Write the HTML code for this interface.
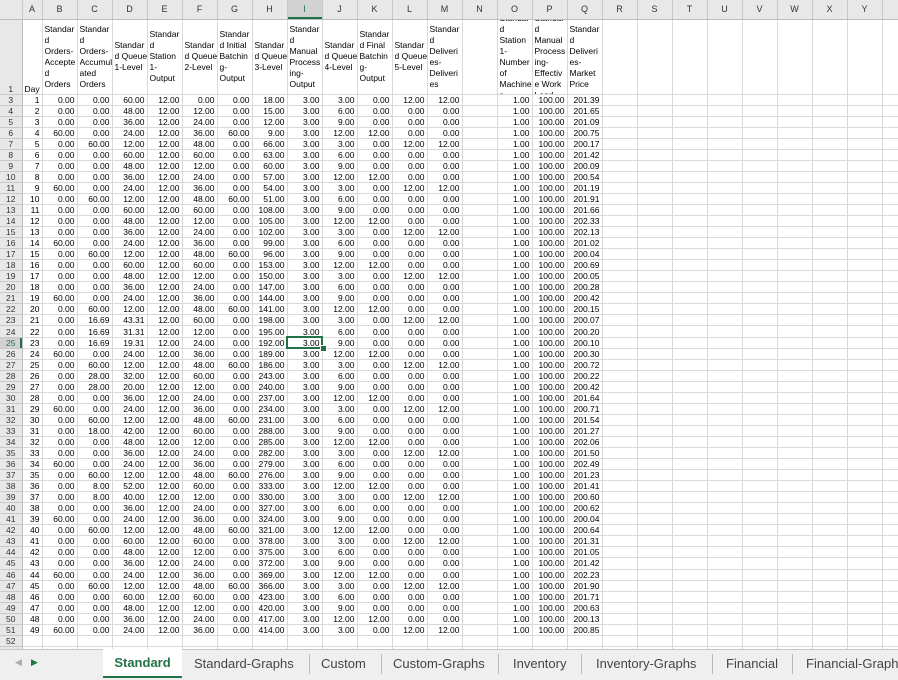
<!DOCTYPE html>
<html><head><meta charset="utf-8">
<style>
html,body{margin:0;padding:0;width:898px;height:679px;overflow:hidden;background:#fff;font-family:"Liberation Sans",Arial,sans-serif;}
table{border-collapse:collapse;table-layout:fixed;position:absolute;left:0;top:0;width:898px;}
tr{height:11.06px;}
td,th{padding:0 2px 0 0;font-size:8.5px;line-height:10px;height:10.06px;border-right:1px solid #d9d9d9;border-bottom:1px solid #d9d9d9;text-align:right;white-space:nowrap;overflow:hidden;color:#000;font-weight:normal;}
tr.ch{height:19px;}
tr.ch th{height:18px;background:#e8e8e8;color:#333;text-align:center;font-size:9px;border-right:1px solid #c8c8c8;border-bottom:1px solid #bcbcbc;padding:0;}
tr.ch th.csel{background:#d2d2d2;box-shadow:inset 0 -2px 0 #217346;color:#217346;}
th.rn{background:#e8e8e8;color:#333;text-align:center;padding:0;border-right:1px solid #bcbcbc;border-bottom:1px solid #c8c8c8;}
th.rnsel{background:#d2d2d2;color:#217346;box-shadow:inset -2px 0 0 #217346;}
tr.h1{height:75px;}
tr.h1 td,tr.h1 th{height:74px;vertical-align:middle;text-align:left;padding:0 0 0 2px;}
tr.h1 th{text-align:center;padding:0;}
tr.h1 td div{height:74px;display:flex;align-items:center;overflow:hidden;line-height:11px;white-space:nowrap;}
tr.h1 td.day{vertical-align:bottom;}
.tabs{position:absolute;left:0;top:649px;width:898px;height:30px;background:#efefef;border-top:1px solid #c6c6c6;font-size:13px;color:#444;}
.tabs span{position:absolute;top:6px;}
.tabs i{position:absolute;top:4px;width:1px;height:20px;background:#b8b8b8;}
.act{position:absolute;left:103px;top:-1px;width:79px;height:27px;background:#fff;border-bottom:2px solid #217346;color:#217346;font-weight:bold;text-align:center;line-height:28px;font-size:13px;}
.selbox{position:absolute;left:286px;top:336px;width:37px;height:13px;border:2px solid #217346;box-sizing:border-box;}
.fh{position:absolute;left:320px;top:345px;width:5px;height:5px;background:#217346;border:1px solid #fff;}
</style></head><body>
<table>
<colgroup><col style="width:22px"><col style="width:20px"><col span="24" style="width:35px"><col style="width:16px"></colgroup>
<tr class="ch"><th></th><th>A</th><th>B</th><th>C</th><th>D</th><th>E</th><th>F</th><th>G</th><th>H</th><th class="csel">I</th><th>J</th><th>K</th><th>L</th><th>M</th><th>N</th><th>O</th><th>P</th><th>Q</th><th>R</th><th>S</th><th>T</th><th>U</th><th>V</th><th>W</th><th>X</th><th>Y</th><th></th></tr>
<tr class="h1"><th class="rn" style="vertical-align:bottom">1</th><td class="day">Day</td>
<td><div>Standar<br>d<br>Orders-<br>Accepte<br>d<br>Orders</div></td>
<td><div>Standar<br>d<br>Orders-<br>Accumul<br>ated<br>Orders</div></td>
<td><div>Standar<br>d Queue<br>1-Level</div></td>
<td><div>Standar<br>d<br>Station<br>1-<br>Output</div></td>
<td><div>Standar<br>d Queue<br>2-Level</div></td>
<td><div>Standar<br>d Initial<br>Batchin<br>g-<br>Output</div></td>
<td><div>Standar<br>d Queue<br>3-Level</div></td>
<td><div>Standar<br>d<br>Manual<br>Process<br>ing-<br>Output</div></td>
<td><div>Standar<br>d Queue<br>4-Level</div></td>
<td><div>Standar<br>d Final<br>Batchin<br>g-<br>Output</div></td>
<td><div>Standar<br>d Queue<br>5-Level</div></td>
<td><div>Standar<br>d<br>Deliveri<br>es-<br>Deliveri<br>es</div></td>
<td></td>
<td><div>Standar<br>d<br>Station<br>1-<br>Number<br>of<br>Machine<br>s</div></td>
<td><div>Standar<br>d<br>Manual<br>Process<br>ing-<br>Effectiv<br>e Work<br>Load</div></td>
<td><div>Standar<br>d<br>Deliveri<br>es-<br>Market<br>Price</div></td>
<td></td><td></td><td></td><td></td><td></td><td></td><td></td><td></td><td></td></tr>
<tr><th class="rn">3</th><td>1</td><td>0.00</td><td>0.00</td><td>60.00</td><td>12.00</td><td>0.00</td><td>0.00</td><td>18.00</td><td>3.00</td><td>3.00</td><td>0.00</td><td>12.00</td><td>12.00</td><td></td><td>1.00</td><td>100.00</td><td>201.39</td><td></td><td></td><td></td><td></td><td></td><td></td><td></td><td></td><td></td></tr>
<tr><th class="rn">4</th><td>2</td><td>0.00</td><td>0.00</td><td>48.00</td><td>12.00</td><td>12.00</td><td>0.00</td><td>15.00</td><td>3.00</td><td>6.00</td><td>0.00</td><td>0.00</td><td>0.00</td><td></td><td>1.00</td><td>100.00</td><td>201.65</td><td></td><td></td><td></td><td></td><td></td><td></td><td></td><td></td><td></td></tr>
<tr><th class="rn">5</th><td>3</td><td>0.00</td><td>0.00</td><td>36.00</td><td>12.00</td><td>24.00</td><td>0.00</td><td>12.00</td><td>3.00</td><td>9.00</td><td>0.00</td><td>0.00</td><td>0.00</td><td></td><td>1.00</td><td>100.00</td><td>201.09</td><td></td><td></td><td></td><td></td><td></td><td></td><td></td><td></td><td></td></tr>
<tr><th class="rn">6</th><td>4</td><td>60.00</td><td>0.00</td><td>24.00</td><td>12.00</td><td>36.00</td><td>60.00</td><td>9.00</td><td>3.00</td><td>12.00</td><td>12.00</td><td>0.00</td><td>0.00</td><td></td><td>1.00</td><td>100.00</td><td>200.75</td><td></td><td></td><td></td><td></td><td></td><td></td><td></td><td></td><td></td></tr>
<tr><th class="rn">7</th><td>5</td><td>0.00</td><td>60.00</td><td>12.00</td><td>12.00</td><td>48.00</td><td>0.00</td><td>66.00</td><td>3.00</td><td>3.00</td><td>0.00</td><td>12.00</td><td>12.00</td><td></td><td>1.00</td><td>100.00</td><td>200.17</td><td></td><td></td><td></td><td></td><td></td><td></td><td></td><td></td><td></td></tr>
<tr><th class="rn">8</th><td>6</td><td>0.00</td><td>0.00</td><td>60.00</td><td>12.00</td><td>60.00</td><td>0.00</td><td>63.00</td><td>3.00</td><td>6.00</td><td>0.00</td><td>0.00</td><td>0.00</td><td></td><td>1.00</td><td>100.00</td><td>201.42</td><td></td><td></td><td></td><td></td><td></td><td></td><td></td><td></td><td></td></tr>
<tr><th class="rn">9</th><td>7</td><td>0.00</td><td>0.00</td><td>48.00</td><td>12.00</td><td>12.00</td><td>0.00</td><td>60.00</td><td>3.00</td><td>9.00</td><td>0.00</td><td>0.00</td><td>0.00</td><td></td><td>1.00</td><td>100.00</td><td>200.09</td><td></td><td></td><td></td><td></td><td></td><td></td><td></td><td></td><td></td></tr>
<tr><th class="rn">10</th><td>8</td><td>0.00</td><td>0.00</td><td>36.00</td><td>12.00</td><td>24.00</td><td>0.00</td><td>57.00</td><td>3.00</td><td>12.00</td><td>12.00</td><td>0.00</td><td>0.00</td><td></td><td>1.00</td><td>100.00</td><td>200.54</td><td></td><td></td><td></td><td></td><td></td><td></td><td></td><td></td><td></td></tr>
<tr><th class="rn">11</th><td>9</td><td>60.00</td><td>0.00</td><td>24.00</td><td>12.00</td><td>36.00</td><td>0.00</td><td>54.00</td><td>3.00</td><td>3.00</td><td>0.00</td><td>12.00</td><td>12.00</td><td></td><td>1.00</td><td>100.00</td><td>201.19</td><td></td><td></td><td></td><td></td><td></td><td></td><td></td><td></td><td></td></tr>
<tr><th class="rn">12</th><td>10</td><td>0.00</td><td>60.00</td><td>12.00</td><td>12.00</td><td>48.00</td><td>60.00</td><td>51.00</td><td>3.00</td><td>6.00</td><td>0.00</td><td>0.00</td><td>0.00</td><td></td><td>1.00</td><td>100.00</td><td>201.91</td><td></td><td></td><td></td><td></td><td></td><td></td><td></td><td></td><td></td></tr>
<tr><th class="rn">13</th><td>11</td><td>0.00</td><td>0.00</td><td>60.00</td><td>12.00</td><td>60.00</td><td>0.00</td><td>108.00</td><td>3.00</td><td>9.00</td><td>0.00</td><td>0.00</td><td>0.00</td><td></td><td>1.00</td><td>100.00</td><td>201.66</td><td></td><td></td><td></td><td></td><td></td><td></td><td></td><td></td><td></td></tr>
<tr><th class="rn">14</th><td>12</td><td>0.00</td><td>0.00</td><td>48.00</td><td>12.00</td><td>12.00</td><td>0.00</td><td>105.00</td><td>3.00</td><td>12.00</td><td>12.00</td><td>0.00</td><td>0.00</td><td></td><td>1.00</td><td>100.00</td><td>202.33</td><td></td><td></td><td></td><td></td><td></td><td></td><td></td><td></td><td></td></tr>
<tr><th class="rn">15</th><td>13</td><td>0.00</td><td>0.00</td><td>36.00</td><td>12.00</td><td>24.00</td><td>0.00</td><td>102.00</td><td>3.00</td><td>3.00</td><td>0.00</td><td>12.00</td><td>12.00</td><td></td><td>1.00</td><td>100.00</td><td>202.13</td><td></td><td></td><td></td><td></td><td></td><td></td><td></td><td></td><td></td></tr>
<tr><th class="rn">16</th><td>14</td><td>60.00</td><td>0.00</td><td>24.00</td><td>12.00</td><td>36.00</td><td>0.00</td><td>99.00</td><td>3.00</td><td>6.00</td><td>0.00</td><td>0.00</td><td>0.00</td><td></td><td>1.00</td><td>100.00</td><td>201.02</td><td></td><td></td><td></td><td></td><td></td><td></td><td></td><td></td><td></td></tr>
<tr><th class="rn">17</th><td>15</td><td>0.00</td><td>60.00</td><td>12.00</td><td>12.00</td><td>48.00</td><td>60.00</td><td>96.00</td><td>3.00</td><td>9.00</td><td>0.00</td><td>0.00</td><td>0.00</td><td></td><td>1.00</td><td>100.00</td><td>200.04</td><td></td><td></td><td></td><td></td><td></td><td></td><td></td><td></td><td></td></tr>
<tr><th class="rn">18</th><td>16</td><td>0.00</td><td>0.00</td><td>60.00</td><td>12.00</td><td>60.00</td><td>0.00</td><td>153.00</td><td>3.00</td><td>12.00</td><td>12.00</td><td>0.00</td><td>0.00</td><td></td><td>1.00</td><td>100.00</td><td>200.69</td><td></td><td></td><td></td><td></td><td></td><td></td><td></td><td></td><td></td></tr>
<tr><th class="rn">19</th><td>17</td><td>0.00</td><td>0.00</td><td>48.00</td><td>12.00</td><td>12.00</td><td>0.00</td><td>150.00</td><td>3.00</td><td>3.00</td><td>0.00</td><td>12.00</td><td>12.00</td><td></td><td>1.00</td><td>100.00</td><td>200.05</td><td></td><td></td><td></td><td></td><td></td><td></td><td></td><td></td><td></td></tr>
<tr><th class="rn">20</th><td>18</td><td>0.00</td><td>0.00</td><td>36.00</td><td>12.00</td><td>24.00</td><td>0.00</td><td>147.00</td><td>3.00</td><td>6.00</td><td>0.00</td><td>0.00</td><td>0.00</td><td></td><td>1.00</td><td>100.00</td><td>200.28</td><td></td><td></td><td></td><td></td><td></td><td></td><td></td><td></td><td></td></tr>
<tr><th class="rn">21</th><td>19</td><td>60.00</td><td>0.00</td><td>24.00</td><td>12.00</td><td>36.00</td><td>0.00</td><td>144.00</td><td>3.00</td><td>9.00</td><td>0.00</td><td>0.00</td><td>0.00</td><td></td><td>1.00</td><td>100.00</td><td>200.42</td><td></td><td></td><td></td><td></td><td></td><td></td><td></td><td></td><td></td></tr>
<tr><th class="rn">22</th><td>20</td><td>0.00</td><td>60.00</td><td>12.00</td><td>12.00</td><td>48.00</td><td>60.00</td><td>141.00</td><td>3.00</td><td>12.00</td><td>12.00</td><td>0.00</td><td>0.00</td><td></td><td>1.00</td><td>100.00</td><td>200.15</td><td></td><td></td><td></td><td></td><td></td><td></td><td></td><td></td><td></td></tr>
<tr><th class="rn">23</th><td>21</td><td>0.00</td><td>16.69</td><td>43.31</td><td>12.00</td><td>60.00</td><td>0.00</td><td>198.00</td><td>3.00</td><td>3.00</td><td>0.00</td><td>12.00</td><td>12.00</td><td></td><td>1.00</td><td>100.00</td><td>200.07</td><td></td><td></td><td></td><td></td><td></td><td></td><td></td><td></td><td></td></tr>
<tr><th class="rn">24</th><td>22</td><td>0.00</td><td>16.69</td><td>31.31</td><td>12.00</td><td>12.00</td><td>0.00</td><td>195.00</td><td>3.00</td><td>6.00</td><td>0.00</td><td>0.00</td><td>0.00</td><td></td><td>1.00</td><td>100.00</td><td>200.20</td><td></td><td></td><td></td><td></td><td></td><td></td><td></td><td></td><td></td></tr>
<tr><th class="rn rnsel">25</th><td>23</td><td>0.00</td><td>16.69</td><td>19.31</td><td>12.00</td><td>24.00</td><td>0.00</td><td>192.00</td><td>3.00</td><td>9.00</td><td>0.00</td><td>0.00</td><td>0.00</td><td></td><td>1.00</td><td>100.00</td><td>200.10</td><td></td><td></td><td></td><td></td><td></td><td></td><td></td><td></td><td></td></tr>
<tr><th class="rn">26</th><td>24</td><td>60.00</td><td>0.00</td><td>24.00</td><td>12.00</td><td>36.00</td><td>0.00</td><td>189.00</td><td>3.00</td><td>12.00</td><td>12.00</td><td>0.00</td><td>0.00</td><td></td><td>1.00</td><td>100.00</td><td>200.30</td><td></td><td></td><td></td><td></td><td></td><td></td><td></td><td></td><td></td></tr>
<tr><th class="rn">27</th><td>25</td><td>0.00</td><td>60.00</td><td>12.00</td><td>12.00</td><td>48.00</td><td>60.00</td><td>186.00</td><td>3.00</td><td>3.00</td><td>0.00</td><td>12.00</td><td>12.00</td><td></td><td>1.00</td><td>100.00</td><td>200.72</td><td></td><td></td><td></td><td></td><td></td><td></td><td></td><td></td><td></td></tr>
<tr><th class="rn">28</th><td>26</td><td>0.00</td><td>28.00</td><td>32.00</td><td>12.00</td><td>60.00</td><td>0.00</td><td>243.00</td><td>3.00</td><td>6.00</td><td>0.00</td><td>0.00</td><td>0.00</td><td></td><td>1.00</td><td>100.00</td><td>200.22</td><td></td><td></td><td></td><td></td><td></td><td></td><td></td><td></td><td></td></tr>
<tr><th class="rn">29</th><td>27</td><td>0.00</td><td>28.00</td><td>20.00</td><td>12.00</td><td>12.00</td><td>0.00</td><td>240.00</td><td>3.00</td><td>9.00</td><td>0.00</td><td>0.00</td><td>0.00</td><td></td><td>1.00</td><td>100.00</td><td>200.42</td><td></td><td></td><td></td><td></td><td></td><td></td><td></td><td></td><td></td></tr>
<tr><th class="rn">30</th><td>28</td><td>0.00</td><td>0.00</td><td>36.00</td><td>12.00</td><td>24.00</td><td>0.00</td><td>237.00</td><td>3.00</td><td>12.00</td><td>12.00</td><td>0.00</td><td>0.00</td><td></td><td>1.00</td><td>100.00</td><td>201.64</td><td></td><td></td><td></td><td></td><td></td><td></td><td></td><td></td><td></td></tr>
<tr><th class="rn">31</th><td>29</td><td>60.00</td><td>0.00</td><td>24.00</td><td>12.00</td><td>36.00</td><td>0.00</td><td>234.00</td><td>3.00</td><td>3.00</td><td>0.00</td><td>12.00</td><td>12.00</td><td></td><td>1.00</td><td>100.00</td><td>200.71</td><td></td><td></td><td></td><td></td><td></td><td></td><td></td><td></td><td></td></tr>
<tr><th class="rn">32</th><td>30</td><td>0.00</td><td>60.00</td><td>12.00</td><td>12.00</td><td>48.00</td><td>60.00</td><td>231.00</td><td>3.00</td><td>6.00</td><td>0.00</td><td>0.00</td><td>0.00</td><td></td><td>1.00</td><td>100.00</td><td>201.54</td><td></td><td></td><td></td><td></td><td></td><td></td><td></td><td></td><td></td></tr>
<tr><th class="rn">33</th><td>31</td><td>0.00</td><td>18.00</td><td>42.00</td><td>12.00</td><td>60.00</td><td>0.00</td><td>288.00</td><td>3.00</td><td>9.00</td><td>0.00</td><td>0.00</td><td>0.00</td><td></td><td>1.00</td><td>100.00</td><td>201.27</td><td></td><td></td><td></td><td></td><td></td><td></td><td></td><td></td><td></td></tr>
<tr><th class="rn">34</th><td>32</td><td>0.00</td><td>0.00</td><td>48.00</td><td>12.00</td><td>12.00</td><td>0.00</td><td>285.00</td><td>3.00</td><td>12.00</td><td>12.00</td><td>0.00</td><td>0.00</td><td></td><td>1.00</td><td>100.00</td><td>202.06</td><td></td><td></td><td></td><td></td><td></td><td></td><td></td><td></td><td></td></tr>
<tr><th class="rn">35</th><td>33</td><td>0.00</td><td>0.00</td><td>36.00</td><td>12.00</td><td>24.00</td><td>0.00</td><td>282.00</td><td>3.00</td><td>3.00</td><td>0.00</td><td>12.00</td><td>12.00</td><td></td><td>1.00</td><td>100.00</td><td>201.50</td><td></td><td></td><td></td><td></td><td></td><td></td><td></td><td></td><td></td></tr>
<tr><th class="rn">36</th><td>34</td><td>60.00</td><td>0.00</td><td>24.00</td><td>12.00</td><td>36.00</td><td>0.00</td><td>279.00</td><td>3.00</td><td>6.00</td><td>0.00</td><td>0.00</td><td>0.00</td><td></td><td>1.00</td><td>100.00</td><td>202.49</td><td></td><td></td><td></td><td></td><td></td><td></td><td></td><td></td><td></td></tr>
<tr><th class="rn">37</th><td>35</td><td>0.00</td><td>60.00</td><td>12.00</td><td>12.00</td><td>48.00</td><td>60.00</td><td>276.00</td><td>3.00</td><td>9.00</td><td>0.00</td><td>0.00</td><td>0.00</td><td></td><td>1.00</td><td>100.00</td><td>201.23</td><td></td><td></td><td></td><td></td><td></td><td></td><td></td><td></td><td></td></tr>
<tr><th class="rn">38</th><td>36</td><td>0.00</td><td>8.00</td><td>52.00</td><td>12.00</td><td>60.00</td><td>0.00</td><td>333.00</td><td>3.00</td><td>12.00</td><td>12.00</td><td>0.00</td><td>0.00</td><td></td><td>1.00</td><td>100.00</td><td>201.41</td><td></td><td></td><td></td><td></td><td></td><td></td><td></td><td></td><td></td></tr>
<tr><th class="rn">39</th><td>37</td><td>0.00</td><td>8.00</td><td>40.00</td><td>12.00</td><td>12.00</td><td>0.00</td><td>330.00</td><td>3.00</td><td>3.00</td><td>0.00</td><td>12.00</td><td>12.00</td><td></td><td>1.00</td><td>100.00</td><td>200.60</td><td></td><td></td><td></td><td></td><td></td><td></td><td></td><td></td><td></td></tr>
<tr><th class="rn">40</th><td>38</td><td>0.00</td><td>0.00</td><td>36.00</td><td>12.00</td><td>24.00</td><td>0.00</td><td>327.00</td><td>3.00</td><td>6.00</td><td>0.00</td><td>0.00</td><td>0.00</td><td></td><td>1.00</td><td>100.00</td><td>200.62</td><td></td><td></td><td></td><td></td><td></td><td></td><td></td><td></td><td></td></tr>
<tr><th class="rn">41</th><td>39</td><td>60.00</td><td>0.00</td><td>24.00</td><td>12.00</td><td>36.00</td><td>0.00</td><td>324.00</td><td>3.00</td><td>9.00</td><td>0.00</td><td>0.00</td><td>0.00</td><td></td><td>1.00</td><td>100.00</td><td>200.04</td><td></td><td></td><td></td><td></td><td></td><td></td><td></td><td></td><td></td></tr>
<tr><th class="rn">42</th><td>40</td><td>0.00</td><td>60.00</td><td>12.00</td><td>12.00</td><td>48.00</td><td>60.00</td><td>321.00</td><td>3.00</td><td>12.00</td><td>12.00</td><td>0.00</td><td>0.00</td><td></td><td>1.00</td><td>100.00</td><td>200.64</td><td></td><td></td><td></td><td></td><td></td><td></td><td></td><td></td><td></td></tr>
<tr><th class="rn">43</th><td>41</td><td>0.00</td><td>0.00</td><td>60.00</td><td>12.00</td><td>60.00</td><td>0.00</td><td>378.00</td><td>3.00</td><td>3.00</td><td>0.00</td><td>12.00</td><td>12.00</td><td></td><td>1.00</td><td>100.00</td><td>201.31</td><td></td><td></td><td></td><td></td><td></td><td></td><td></td><td></td><td></td></tr>
<tr><th class="rn">44</th><td>42</td><td>0.00</td><td>0.00</td><td>48.00</td><td>12.00</td><td>12.00</td><td>0.00</td><td>375.00</td><td>3.00</td><td>6.00</td><td>0.00</td><td>0.00</td><td>0.00</td><td></td><td>1.00</td><td>100.00</td><td>201.05</td><td></td><td></td><td></td><td></td><td></td><td></td><td></td><td></td><td></td></tr>
<tr><th class="rn">45</th><td>43</td><td>0.00</td><td>0.00</td><td>36.00</td><td>12.00</td><td>24.00</td><td>0.00</td><td>372.00</td><td>3.00</td><td>9.00</td><td>0.00</td><td>0.00</td><td>0.00</td><td></td><td>1.00</td><td>100.00</td><td>201.42</td><td></td><td></td><td></td><td></td><td></td><td></td><td></td><td></td><td></td></tr>
<tr><th class="rn">46</th><td>44</td><td>60.00</td><td>0.00</td><td>24.00</td><td>12.00</td><td>36.00</td><td>0.00</td><td>369.00</td><td>3.00</td><td>12.00</td><td>12.00</td><td>0.00</td><td>0.00</td><td></td><td>1.00</td><td>100.00</td><td>202.23</td><td></td><td></td><td></td><td></td><td></td><td></td><td></td><td></td><td></td></tr>
<tr><th class="rn">47</th><td>45</td><td>0.00</td><td>60.00</td><td>12.00</td><td>12.00</td><td>48.00</td><td>60.00</td><td>366.00</td><td>3.00</td><td>3.00</td><td>0.00</td><td>12.00</td><td>12.00</td><td></td><td>1.00</td><td>100.00</td><td>201.90</td><td></td><td></td><td></td><td></td><td></td><td></td><td></td><td></td><td></td></tr>
<tr><th class="rn">48</th><td>46</td><td>0.00</td><td>0.00</td><td>60.00</td><td>12.00</td><td>60.00</td><td>0.00</td><td>423.00</td><td>3.00</td><td>6.00</td><td>0.00</td><td>0.00</td><td>0.00</td><td></td><td>1.00</td><td>100.00</td><td>201.71</td><td></td><td></td><td></td><td></td><td></td><td></td><td></td><td></td><td></td></tr>
<tr><th class="rn">49</th><td>47</td><td>0.00</td><td>0.00</td><td>48.00</td><td>12.00</td><td>12.00</td><td>0.00</td><td>420.00</td><td>3.00</td><td>9.00</td><td>0.00</td><td>0.00</td><td>0.00</td><td></td><td>1.00</td><td>100.00</td><td>200.63</td><td></td><td></td><td></td><td></td><td></td><td></td><td></td><td></td><td></td></tr>
<tr><th class="rn">50</th><td>48</td><td>0.00</td><td>0.00</td><td>36.00</td><td>12.00</td><td>24.00</td><td>0.00</td><td>417.00</td><td>3.00</td><td>12.00</td><td>12.00</td><td>0.00</td><td>0.00</td><td></td><td>1.00</td><td>100.00</td><td>200.13</td><td></td><td></td><td></td><td></td><td></td><td></td><td></td><td></td><td></td></tr>
<tr><th class="rn">51</th><td>49</td><td>60.00</td><td>0.00</td><td>24.00</td><td>12.00</td><td>36.00</td><td>0.00</td><td>414.00</td><td>3.00</td><td>3.00</td><td>0.00</td><td>12.00</td><td>12.00</td><td></td><td>1.00</td><td>100.00</td><td>200.85</td><td></td><td></td><td></td><td></td><td></td><td></td><td></td><td></td><td></td></tr>
<tr><th class="rn">52</th><td></td><td></td><td></td><td></td><td></td><td></td><td></td><td></td><td></td><td></td><td></td><td></td><td></td><td></td><td></td><td></td><td></td><td></td><td></td><td></td><td></td><td></td><td></td><td></td><td></td><td></td></tr>
<tr><th class="rn">53</th><td></td><td></td><td></td><td></td><td></td><td></td><td></td><td></td><td></td><td></td><td></td><td></td><td></td><td></td><td></td><td></td><td></td><td></td><td></td><td></td><td></td><td></td><td></td><td></td><td></td><td></td></tr>
</table>
<div class="selbox"></div><div class="fh"></div>
<div class="tabs">
<span style="left:15px;top:7px;color:#aaa;font-size:9px">&#9664;</span>
<span style="left:31px;top:7px;color:#217346;font-size:9px">&#9654;</span>
<div class="act">Standard</div>
<span style="left:194px">Standard-Graphs</span><i style="left:309px"></i>
<span style="left:321px">Custom</span><i style="left:381px"></i>
<span style="left:393px">Custom-Graphs</span><i style="left:498px"></i>
<span style="left:513px">Inventory</span><i style="left:581px"></i>
<span style="left:596px">Inventory-Graphs</span><i style="left:712px"></i>
<span style="left:726px">Financial</span><i style="left:792px"></i>
<span style="left:806px;white-space:nowrap">Financial-Graphs</span>
</div>
</body></html>
